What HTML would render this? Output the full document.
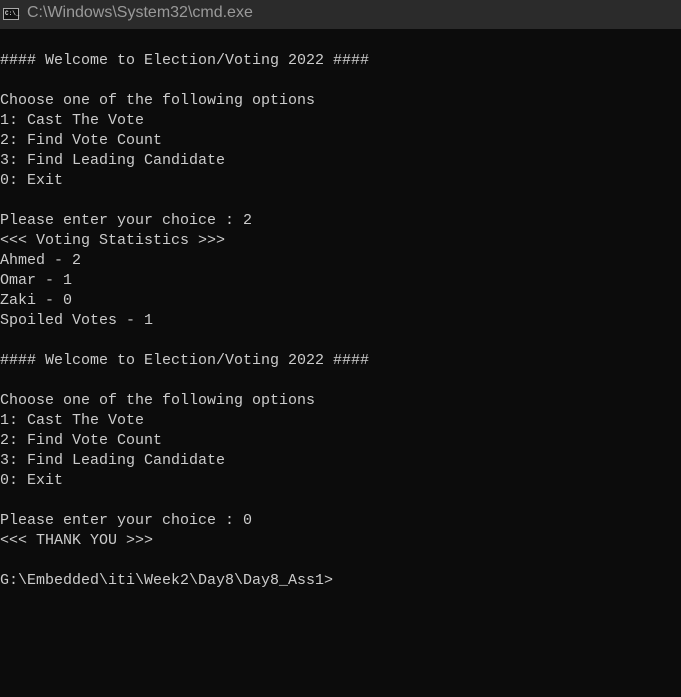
<!DOCTYPE html>
<html><head><style>
html,body{margin:0;padding:0;width:681px;height:697px;background:#0c0c0c;overflow:hidden}
#tb{position:absolute;left:0;top:0;width:681px;height:29px;background:#2b2b2b}
#tb .t{position:absolute;left:27px;top:4px;font:16px "Liberation Sans",sans-serif;color:#9a9a9a}
#ic{position:absolute;left:3px;top:8px;width:16px;height:12px;background:#111;border:1px solid #aaa;box-sizing:border-box}
#ic span{position:absolute;left:1px;top:1px;font:bold 6px "Liberation Mono",monospace;color:#ddd;line-height:7px}
pre{position:absolute;left:0;top:51px;margin:0;font:15px/20px "Liberation Mono",monospace;color:#cccccc}
</style></head><body>
<div id="tb"><div id="ic"><span>C:\_</span></div><div class="t">C:\Windows\System32\cmd.exe</div></div>
<pre>#### Welcome to Election/Voting 2022 ####

Choose one of the following options
1: Cast The Vote
2: Find Vote Count
3: Find Leading Candidate
0: Exit

Please enter your choice : 2
&lt;&lt;&lt; Voting Statistics &gt;&gt;&gt;
Ahmed - 2
Omar - 1
Zaki - 0
Spoiled Votes - 1

#### Welcome to Election/Voting 2022 ####

Choose one of the following options
1: Cast The Vote
2: Find Vote Count
3: Find Leading Candidate
0: Exit

Please enter your choice : 0
&lt;&lt;&lt; THANK YOU &gt;&gt;&gt;

G:\Embedded\iti\Week2\Day8\Day8_Ass1&gt;</pre>
</body></html>
